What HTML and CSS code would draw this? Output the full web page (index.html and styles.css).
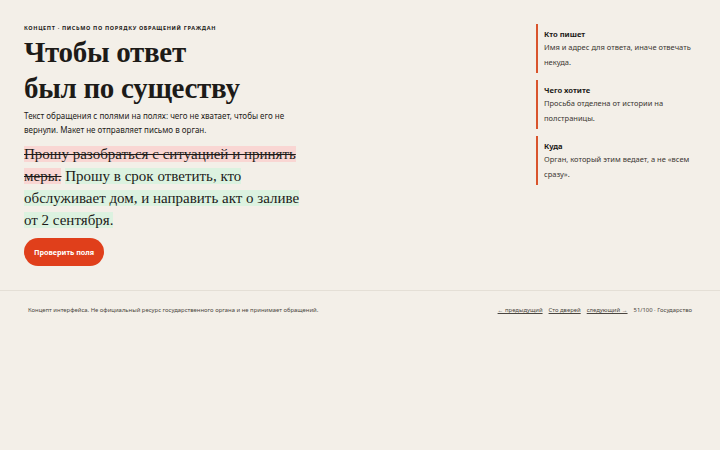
FILE: index.html
```html
<!DOCTYPE html>
<html lang="ru">
<head>
    <meta charset="UTF-8" />
    <meta name="viewport" content="width=device-width, initial-scale=1.0" />
    <title>Письмо по порядку обращений граждан</title>
    <link rel="stylesheet" href="styles.css">
</head>
<body>

    <main class="page">
        <!-- Левая колонка: заголовок и текст обращения -->
        <section class="letter">
            <div class="eyebrow">Концепт · письмо по порядку обращений граждан</div>
            <h1>Чтобы ответ<br>был по существу</h1>
            <p class="lead">Текст обращения с полями на полях: чего не хватает, чтобы его не вернули. Макет не отправляет письмо в орган.</p>

            <p class="sample"><del>Прошу разобраться с ситуацией и принять меры.</del> <ins>Прошу в срок ответить, кто обслуживает дом, и направить акт о заливе от 2 сентября.</ins></p>

            <button class="check-btn">Проверить поля</button>
        </section>

        <!-- Поля на полях -->
        <aside class="notes">
            <div class="note">
                <div class="note-title">Кто пишет</div>
                <div class="note-text">Имя и адрес для ответа, иначе отвечать некуда.</div>
            </div>
            <div class="note">
                <div class="note-title">Чего хотите</div>
                <div class="note-text">Просьба отделена от истории на полстраницы.</div>
            </div>
            <div class="note">
                <div class="note-title">Куда</div>
                <div class="note-text">Орган, который этим ведает, а не «всем сразу».</div>
            </div>
        </aside>
    </main>

    <footer class="footer">
        <span>Концепт интерфейса. Не официальный ресурс государственного органа и не принимает обращений.</span>
        <nav class="footer-nav">
            <a href="#">← предыдущий</a>
            <a href="#">Сто дверей</a>
            <a href="#">следующий →</a>
            <span>51/100 · Государство</span>
        </nav>
    </footer>

</body>
</html>
```

FILE: styles.css
```css
body {
    margin: 0;
    background-color: #f3efe8;
    color: #1d1b18;
    font-family: 'Noto Sans', sans-serif;
}

.page {
    display: grid;
    grid-template-columns: 1fr 160px;
    gap: 40px;
    padding: 24px 24px 24px 24px;
    border-bottom: 1px solid #e4dfd6;
}

.letter {
    max-width: 278px;
}

.eyebrow {
    font-size: 5.5px;
    font-weight: 700;
    text-transform: uppercase;
    letter-spacing: 0.12em;
    line-height: 8px;
}

h1 {
    font-family: 'Liberation Serif', serif;
    font-size: 29px;
    line-height: 36px;
    font-weight: 700;
    letter-spacing: -0.3px;
    margin: 2px 0 3px;
}

.lead {
    font-size: 8px;
    line-height: 14px;
    margin: 0 0 6px;
}

.sample {
    font-family: 'Liberation Serif', serif;
    font-size: 15px;
    line-height: 22px;
    margin: 0;
}

.sample del {
    background-color: #f9d6d3;
    text-decoration: line-through;
}

.sample ins {
    background-color: #dcf2e0;
    text-decoration: none;
}

.check-btn {
    margin-top: 7px;
    height: 28px;
    padding: 0 10px;
    background-color: #e03f1b;
    color: white;
    border: none;
    border-radius: 14px;
    font-family: 'Noto Sans', sans-serif;
    font-size: 7.2px;
    font-weight: 700;
    cursor: pointer;
}

.notes {
    display: flex;
    flex-direction: column;
    gap: 7px;
}

.note {
    border-left: 2px solid #d9542c;
    padding: 4px 0 3px 6px;
}

.note-title {
    font-size: 7.6px;
    font-weight: 700;
    line-height: 12px;
}

.note-text {
    font-size: 7.5px;
    line-height: 15px;
    color: #3a3631;
}

footer.footer {
    display: flex;
    justify-content: space-between;
    align-items: center;
    padding: 15px 28px;
    font-size: 5.9px;
    color: #4a4640;
}

.footer-nav {
    display: flex;
    gap: 6px;
}

.footer-nav a {
    color: #4a4640;
    text-decoration: underline;
}
```
